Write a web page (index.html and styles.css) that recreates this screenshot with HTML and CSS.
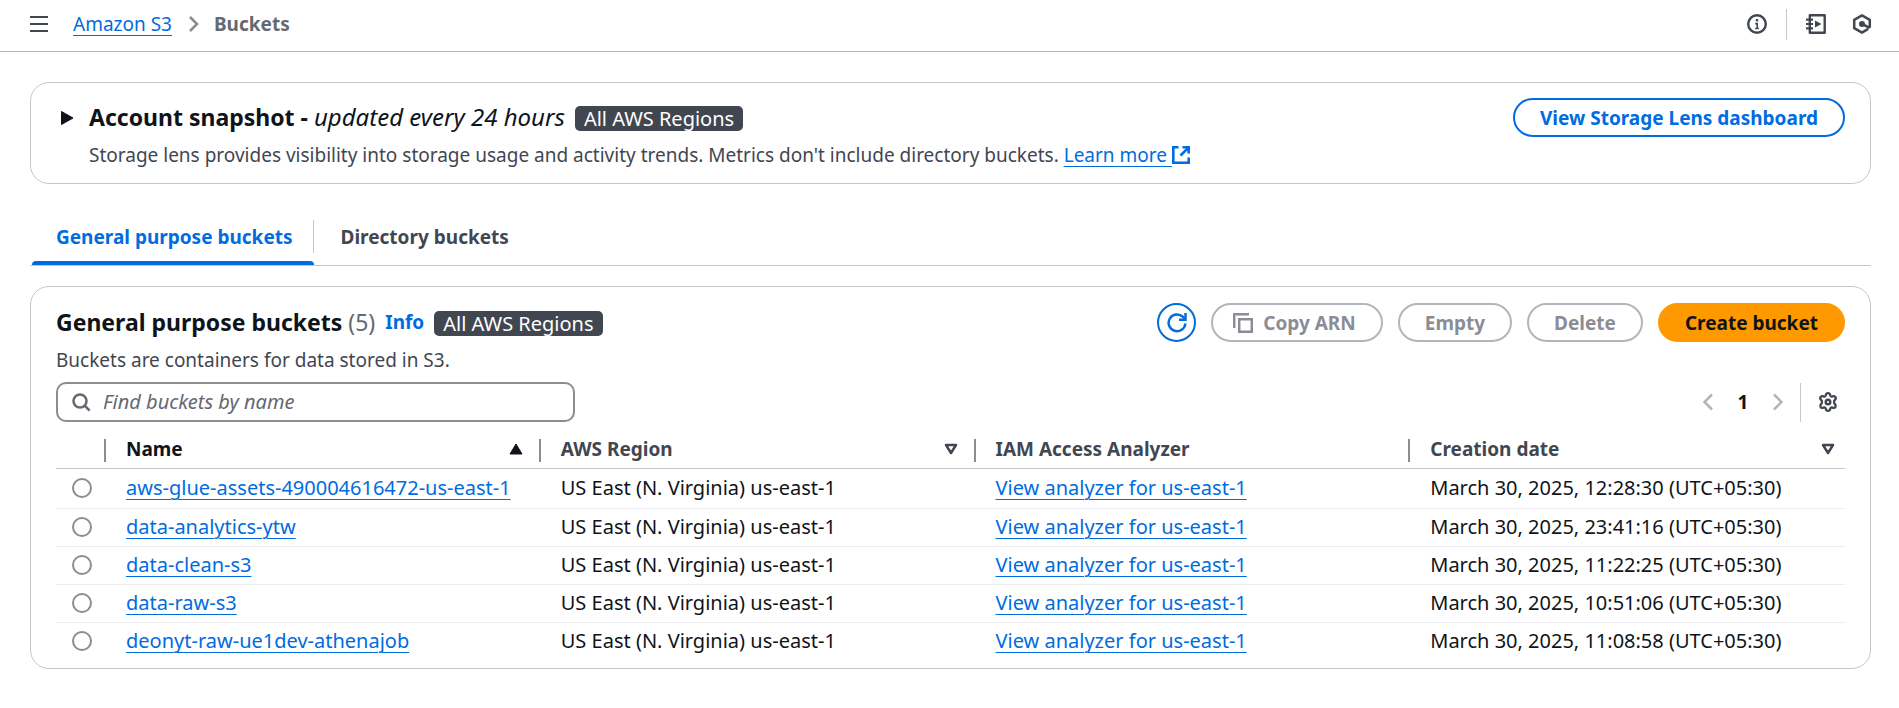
FILE: index.html
```html
<!DOCTYPE html>
<html lang="en">
<head>
<meta charset="utf-8">
<meta name="viewport" content="width=device-width, initial-scale=1">
<title>S3 buckets</title>
<link rel="stylesheet" href="styles.css">
</head>
<body>
<header class="topbar">
  <nav class="crumbs" aria-label="Breadcrumbs">
    <button class="icon-btn menu-btn" aria-label="Open navigation">
      <svg width="18" height="18" viewBox="0 0 18 18"><path d="M0 2h18M0 9h18M0 16h18" stroke="currentColor" stroke-width="2.2"/></svg>
    </button>
    <a class="link" href="#">Amazon S3</a>
    <svg class="crumb-sep" width="12" height="18" viewBox="0 0 12 18"><path d="M2 2l7 7-7 7" fill="none" stroke="currentColor" stroke-width="2.6"/></svg>
    <span class="crumb-current">Buckets</span>
  </nav>
  <div class="tools">
    <button class="icon-btn" aria-label="Help">
      <svg width="20" height="20" viewBox="0 0 20 20"><circle cx="10" cy="10" r="8.8" fill="none" stroke="currentColor" stroke-width="2.4"/><path d="M10 5v2.400" fill="none" stroke="currentColor" stroke-width="2.400"/><path d="M8.200 9.600h2V15M8.200 14.500h3.600" fill="none" stroke="currentColor" stroke-width="1.600"/></svg>
    </button>
    <span class="tools-divider"></span>
    <button class="icon-btn" aria-label="Tutorials">
      <svg width="20" height="20" viewBox="0 0 20 20"><path d="M3.800 1.200h14.900v17.600H3.800z" fill="none" stroke="currentColor" stroke-width="2.400" stroke-linejoin="round"/><path d="M0 5.700h7M0 10h7M0 14.300h7" stroke="currentColor" stroke-width="2.200"/><path d="M9 6.500l6.500 3.500L9 13.500z" fill="currentColor"/></svg>
    </button>
    <button class="icon-btn" aria-label="Assistant">
      <svg width="20" height="20" viewBox="0 0 20 20"><path d="M16.200 14.900L10 18.600 2.200 14.200V5.800L10 1.400l7.800 4.400v8" fill="none" stroke="currentColor" stroke-width="2.500" stroke-linejoin="round"/><circle cx="10" cy="10" r="3" fill="currentColor"/><path d="M10 10l7.800 3.800" stroke="currentColor" stroke-width="2.600"/></svg>
    </button>
  </div>
</header>

<main class="content">
  <section class="card snapshot">
    <button class="icon-btn caret" aria-label="Expand account snapshot">
      <svg width="14" height="14" viewBox="0 0 14 14"><path d="M.5 .5L12 7 .5 13.500z" fill="currentColor" stroke="currentColor" stroke-linejoin="round"/></svg>
    </button>
    <div class="snapshot-body">
      <div class="title-row">
        <h2 class="title">Account snapshot - <em class="title-note">updated every 24 hours</em></h2>
        <span class="badge">All AWS Regions</span>
      </div>
      <p class="desc">Storage lens provides visibility into storage usage and activity trends. Metrics don't include directory buckets. <a class="link" href="#">Learn more </a><svg class="ext" width="18" height="18" viewBox="0 0 18 18"><path d="M6.500 1.300H1.300v15.400h15.400V11.500M10.500 1.300h6.200v6.200M16.700 1.300L8.500 9.500" fill="none" stroke="currentColor" stroke-width="2.600"/></svg></p>
    </div>
    <button class="btn btn-primary-outline">View Storage Lens dashboard</button>
  </section>

  <div class="tabs" role="tablist">
    <button class="tab tab-active" role="tab" aria-selected="true">General purpose buckets</button>
    <button class="tab" role="tab" aria-selected="false">Directory buckets</button>
  </div>

  <section class="card buckets">
    <div class="buckets-head">
      <div>
        <div class="title-row">
          <h2 class="title">General purpose buckets <span class="count">(5)</span></h2>
          <a class="info" href="#">Info</a>
          <span class="badge">All AWS Regions</span>
        </div>
        <p class="desc">Buckets are containers for data stored in S3.</p>
      </div>
      <div class="actions">
        <button class="btn btn-primary-outline btn-round" aria-label="Refresh">
          <svg width="20" height="20" viewBox="0 0 20 20"><path d="M18.400 10.500a8.400 8.400 0 1 1-2.600-6.800L18 6" fill="none" stroke="currentColor" stroke-width="2.500"/><path d="M18.500 0v6.800H12" fill="none" stroke="currentColor" stroke-width="2.500"/></svg>
        </button>
        <button class="btn btn-disabled btn-icon" disabled>
          <svg width="20" height="20" viewBox="0 0 20 20"><path d="M1.200 15V1.200H16M6.200 6.200h12.600v12.600H6.200z" fill="none" stroke="currentColor" stroke-width="2.500"/></svg>
          Copy ARN
        </button>
        <button class="btn btn-disabled" disabled>Empty</button>
        <button class="btn btn-disabled" disabled>Delete</button>
        <button class="btn btn-create">Create bucket</button>
      </div>
    </div>

    <div class="filter-row">
      <label class="search">
        <svg width="19" height="19" viewBox="0 0 19 19"><circle cx="8" cy="8" r="6.500" fill="none" stroke="currentColor" stroke-width="2.500"/><path d="M12.500 12.500l5.200 5.200" stroke="currentColor" stroke-width="2.500"/></svg>
        <input class="search-input" type="text" placeholder="Find buckets by name" aria-label="Find buckets by name">
      </label>
      <div class="pager">
        <button class="icon-btn page-arrow" aria-label="Previous page"><svg width="12" height="18" viewBox="0 0 12 18"><path d="M10 1.500L2.500 9l7.500 7.500" fill="none" stroke="currentColor" stroke-width="2.500"/></svg></button>
        <button class="page-num">1</button>
        <button class="icon-btn page-arrow" aria-label="Next page"><svg width="12" height="18" viewBox="0 0 12 18"><path d="M2 1.500L9.500 9 2 16.500" fill="none" stroke="currentColor" stroke-width="2.500"/></svg></button>
        <span class="pager-divider"></span>
        <button class="icon-btn" aria-label="Preferences">
          <svg width="20" height="20" viewBox="0 0 20 20"><path d="M10 1.200c1.900 0 2 .9 2.300 2.300.3 1 1.200 1.300 2.100.9 1.400-.6 2.300-.7 3.100.7.900 1.600.2 2.200-.8 3.100-.9.800-.9 2.600 0 3.500 1 1 1.700 1.600.8 3.200-.8 1.400-1.700 1.300-3.100.7-.9-.4-1.800-.1-2.100.9-.3 1.400-.4 2.300-2.300 2.300s-2-.9-2.300-2.300c-.3-1-1.200-1.300-2.100-.9-1.400.6-2.300.7-3.100-.7-.9-1.600-.2-2.200.8-3.200.9-.9.900-2.700 0-3.500-1-.9-1.700-1.500-.8-3.100.8-1.400 1.700-1.300 3.100-.7.900.4 1.800.1 2.100-.9C8 2.100 8.100 1.200 10 1.200z" fill="none" stroke="currentColor" stroke-width="2.300" stroke-linejoin="round"/><circle cx="10" cy="10" r="2.300" fill="none" stroke="currentColor" stroke-width="2.400"/></svg>
        </button>
      </div>
    </div>

    <table class="table">
      <colgroup><col class="col-select"><col><col><col><col></colgroup>
      <thead>
        <tr>
          <th class="th-select" aria-label="Select"></th>
          <th><button class="sort sorted">Name <svg width="14" height="12" viewBox="0 0 14 12"><path d="M7 1l6 10H1z" fill="currentColor" stroke="currentColor" stroke-linejoin="round"/></svg></button></th>
          <th><button class="sort">AWS Region <svg width="14" height="12" viewBox="0 0 14 12"><path d="M2 2h10l-5 8z" fill="none" stroke="currentColor" stroke-width="2.500" stroke-linejoin="round"/></svg></button></th>
          <th>IAM Access Analyzer</th>
          <th><button class="sort">Creation date <svg width="14" height="12" viewBox="0 0 14 12"><path d="M2 2h10l-5 8z" fill="none" stroke="currentColor" stroke-width="2.500" stroke-linejoin="round"/></svg></button></th>
        </tr>
      </thead>
      <tbody>
        <tr>
          <td class="td-select"><input class="radio" type="radio" name="bucket" aria-label="aws-glue-assets-490004616472-us-east-1"></td>
          <td><a class="link" href="#">aws-glue-assets-490004616472-us-east-1</a></td>
          <td>US East (N. Virginia) us-east-1</td>
          <td><a class="link" href="#">View analyzer for us-east-1</a></td>
          <td>March 30, 2025, 12:28:30 (UTC+05:30)</td>
        </tr>
        <tr>
          <td class="td-select"><input class="radio" type="radio" name="bucket" aria-label="data-analytics-ytw"></td>
          <td><a class="link" href="#">data-analytics-ytw</a></td>
          <td>US East (N. Virginia) us-east-1</td>
          <td><a class="link" href="#">View analyzer for us-east-1</a></td>
          <td>March 30, 2025, 23:41:16 (UTC+05:30)</td>
        </tr>
        <tr>
          <td class="td-select"><input class="radio" type="radio" name="bucket" aria-label="data-clean-s3"></td>
          <td><a class="link" href="#">data-clean-s3</a></td>
          <td>US East (N. Virginia) us-east-1</td>
          <td><a class="link" href="#">View analyzer for us-east-1</a></td>
          <td>March 30, 2025, 11:22:25 (UTC+05:30)</td>
        </tr>
        <tr>
          <td class="td-select"><input class="radio" type="radio" name="bucket" aria-label="data-raw-s3"></td>
          <td><a class="link" href="#">data-raw-s3</a></td>
          <td>US East (N. Virginia) us-east-1</td>
          <td><a class="link" href="#">View analyzer for us-east-1</a></td>
          <td>March 30, 2025, 10:51:06 (UTC+05:30)</td>
        </tr>
        <tr>
          <td class="td-select"><input class="radio" type="radio" name="bucket" aria-label="deonyt-raw-ue1dev-athenajob"></td>
          <td><a class="link" href="#">deonyt-raw-ue1dev-athenajob</a></td>
          <td>US East (N. Virginia) us-east-1</td>
          <td><a class="link" href="#">View analyzer for us-east-1</a></td>
          <td>March 30, 2025, 11:08:58 (UTC+05:30)</td>
        </tr>
      </tbody>
    </table>
  </section>
</main>
</body>
</html>
```
FILE: styles.css
```css
:root {
  --ink: #0f141a;
  --body: #424650;
  --muted: #656871;
  --blue: #006ce0;
  --line: #c6c6cd;
  --line-light: #ebebf0;
  --control: #8c8c94;
}
* { box-sizing: border-box; }
body {
  margin: 0;
  background: #fff;
  color: var(--ink);
  font-family: "Noto Sans", "Open Sans", sans-serif;
  font-size: 19px;
  line-height: 24px;
}
button, input { font: inherit; color: inherit; }
button { border: 0; background: none; padding: 0; cursor: pointer; }
svg { display: block; flex: none; }
h2, p { margin: 0; }

.link {
  color: var(--blue);
  text-decoration: underline;
  text-decoration-thickness: 1px;
  text-underline-offset: 4px;
}
.icon-btn { display: flex; color: var(--body); }

.topbar {
  display: flex;
  align-items: center;
  justify-content: space-between;
  height: 52px;
  padding: 0 27px 3px 30px;
  border-bottom: 1px solid #b4b4bb;
}
.crumbs, .tools { display: flex; align-items: center; }
.menu-btn { margin-right: 25px; }
.crumb-sep { margin: 0 14px 0 16px; color: var(--control); }
.crumb-current { color: var(--muted); font-weight: 700; }
.tools { gap: 19px; }
.tools .icon-btn:last-child { margin-left: 7px; }
.tools-divider { width: 1px; height: 31px; background: var(--line); }

.content { padding: 30px 28px 0 30px; }
.card { border: 1px solid var(--line); border-radius: 19px; }

.snapshot {
  display: flex;
  align-items: flex-start;
  padding: 15px 25px 12px 30px;
}
.caret { margin: 13px 14px 0 0; color: var(--ink); }
.snapshot-body { flex: 1; }
.title-row {
  display: flex;
  align-items: center;
  height: 38px;
  gap: 10px;
  margin-bottom: 3px;
}
.title { font-size: 23px; line-height: 30px; font-weight: 700; }
.title-note { font-size: 24px; font-weight: 400; }
.count { font-weight: 400; color: var(--muted); }
.desc { color: var(--body); line-height: 32px; }
.ext { display: inline-block; vertical-align: -2px; color: var(--blue); }
.badge {
  padding: 0 9px;
  margin-top: 2px;
  border-radius: 5px;
  background: var(--body);
  color: #fff;
  font-size: 20px;
  line-height: 25px;
}
.info { color: var(--blue); font-weight: 700; text-decoration: none; }

.btn {
  display: flex;
  align-items: center;
  justify-content: center;
  gap: 10px;
  height: 39px;
  padding: 0 25px;
  border: 2px solid;
  border-radius: 20px;
  font-weight: 700;
  white-space: nowrap;
}
.btn-primary-outline { color: var(--blue); }
.btn-round { width: 39px; padding: 0; }
.btn-disabled { color: var(--control); border-color: #b4b4bb; }
.btn-icon { padding: 0 25px 0 20px; }
.btn-create { background: #ff9900; border-color: #ff9900; color: var(--ink); }

.tabs {
  display: flex;
  gap: 3px;
  margin-top: 28px;
  padding-left: 2px;
  border-bottom: 1px solid var(--line);
}
.tab {
  position: relative;
  height: 53px;
  padding: 0 21px 3px 24px;
  color: var(--body);
  font-weight: 700;
}
.tab-active { color: var(--blue); }
.tab-active::before {
  content: "";
  position: absolute;
  top: 8px;
  bottom: 12px;
  right: 0;
  border-right: 1px solid var(--line);
}
.tab-active::after {
  content: "";
  position: absolute;
  left: 0;
  right: 0;
  bottom: 0;
  height: 4px;
  border-radius: 4px 4px 0 0;
  background: var(--blue);
}

.buckets { margin-top: 20px; padding: 16px 25px 8px; }
.buckets-head { display: flex; justify-content: space-between; }
.actions { display: flex; gap: 15px; }
.filter-row {
  display: flex;
  align-items: center;
  justify-content: space-between;
  margin-top: 6px;
}
.search {
  display: flex;
  align-items: center;
  gap: 12px;
  width: 29%;
  height: 40px;
  padding: 0 14px;
  border: 2px solid var(--control);
  border-radius: 10px;
  color: var(--muted);
}
.search-input {
  flex: 1;
  min-width: 0;
  border: 0;
  padding: 0;
  outline: 0;
  background: none;
  font-size: 20px;
}
.search-input::placeholder { color: var(--muted); font-style: italic; opacity: 1; }
.pager { display: flex; align-items: center; padding-right: 7px; }
.page-arrow { color: #b4b4bb; }
.page-num { width: 58px; font-weight: 700; }
.pager-divider { width: 1px; height: 39px; margin: 0 17px 0 16px; background: var(--line); }

.table { width: 100%; border-collapse: collapse; table-layout: fixed; }
.col-select { width: 50px; }
.table th, .table td { padding: 0 20px; text-align: left; height: 38px; }
.table th {
  position: relative;
  height: 46px;
  padding-top: 8px;
  color: var(--body);
  border-bottom: 1px solid var(--line);
}
.table th:not(:last-child)::after {
  content: "";
  position: absolute;
  right: 0;
  top: 17px;
  bottom: 6px;
  border-right: 2px solid var(--control);
}
.table .th-select::after { border-color: var(--line); }
.table td { border-bottom: 1px solid var(--line-light); font-size: 20px; white-space: nowrap; }
.table tr:first-child td { height: 40px; }
.table tr:last-child td { border-bottom: 0; }
.table .td-select { padding: 0 0 0 16px; }
.sort {
  display: flex;
  align-items: center;
  justify-content: space-between;
  width: 100%;
  font-weight: 700;
}
.sorted { color: var(--ink); }
.table th:nth-child(2), .table th:nth-child(3) { padding-right: 18px; }
.table th:last-child { padding-right: 10px; }
.radio {
  display: block;
  appearance: none;
  width: 20px;
  height: 20px;
  margin: 0;
  border: 2px solid var(--control);
  border-radius: 50%;
}
```
